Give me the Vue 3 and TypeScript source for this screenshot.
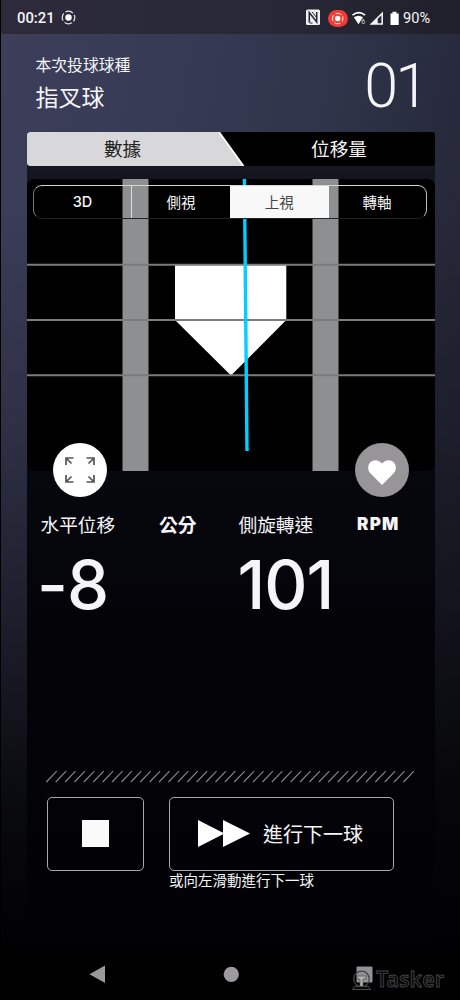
<script setup lang="ts">
import { ref } from 'vue'

const views = ['3D', '側視', '上視', '轉軸']
const activeView = ref(2)
const metrics = [
  { label: '水平位移', unit: '公分', value: '-8', latin: false },
  { label: '側旋轉速', unit: 'RPM', value: '101', latin: true },
]
const hatches = Array.from({ length: 39 }, (_, i) => i * 9.4)
</script>

<template>
  <div class="screen">
    <header class="status">
      <span class="clock">00:21</span>
      <svg class="rec" width="15" height="15" viewBox="0 0 15 15">
        <circle cx="7.5" cy="7.5" r="3.2" fill="#fff" />
        <circle cx="7.5" cy="7.5" r="6.3" fill="none" stroke="#e6e6ea" stroke-width="1.2" stroke-dasharray="7.9 2" stroke-dashoffset="3.9" />
      </svg>
      <svg class="icons" width="100" height="20" viewBox="306 7 100 20">
        <path d="M308.500 8.500h11q1.500 0 1.500 1.500v12.500q0 1.500-1.500 1.500h-11q-1.500 0-1.500-1.500v-12.500q0-1.500 1.500-1.500z" fill="#f1f1f3" />
        <path d="M310.300 21.500V11.500l7.400 9.500V11" fill="none" stroke="#292938" stroke-width="1.600" />
        <path d="M313 10.800l4.500 5.700M310.500 22h3" fill="none" stroke="#292938" stroke-width="1" />
        <rect x="329" y="9" width="20" height="17" rx="8.5" fill="#f13c35" />
        <circle cx="338.7" cy="17.5" r="5.2" fill="none" stroke="#ffd5cf" stroke-width="1.1" stroke-dasharray="6.2 2" stroke-dashoffset="3" />
        <circle cx="338.7" cy="17.5" r="2.7" fill="#fff" />
        <path d="M353.500 14.200q6.200-5.200 12.600 0" fill="none" stroke="#fff" stroke-width="1.600" />
        <path d="M354.800 16.300q4.500-3.300 9.200 0l-4.500 7z" fill="#fff" />
        <text x="362.300" y="22.500" class="tiny">6</text>
        <path d="M370.500 23.800L384 10.500v13.300z" fill="#f4f4f5" />
        <path d="M378.700 17.800l3.700-3.600v8h-3.700z" fill="#292938" />
        <path d="M391.500 12.400h2v-1.600h4v1.600h2.200V24h-8.200z" fill="#fff" />
      </svg>
      <span class="battery">90%</span>
    </header>

    <main>
      <section class="pitch">
        <div>
          <p class="caption">本次投球球種</p>
          <h1>指叉球</h1>
        </div>
        <span class="number">01</span>
      </section>

      <section class="panel">
        <nav class="tabs">
          <svg class="tab-shape" width="408" height="34" viewBox="0 0 408 34">
            <path d="M2 0H192L216.500 34H2Q0 34 0 32V2Q0 0 2 0z" fill="#d8d8da" />
            <path d="M192 0L216.500 34" stroke="#fff" stroke-width="1.800" />
          </svg>
          <span class="tab selected">數據</span>
          <span class="tab">位移量</span>
        </nav>

        <div class="viewer">
          <svg class="field" width="408" height="292" viewBox="27 179 408 292">
            <path d="M175 265h111.300v55L231 375.500L175 320z" fill="#fff" />
            <path d="M122.500 179h26v292h-26zM312.500 179h26v292h-26z" fill="#8e8f90" />
            <path d="M27 264.800h408M27 320h408M27 375.300h408" stroke="#7b7b7b" stroke-width="2" />
            <path d="M244.400 179L247 451" stroke="#00cfff" stroke-width="3.400" />
          </svg>
          <div class="segments">
            <button v-for="(view, i) in views" :key="view" :class="{ active: activeView === i }" @click="activeView = i">
              {{ view }}
            </button>
          </div>
          <div class="round-actions">
            <button class="round light">
              <svg width="32" height="28" viewBox="0 0 32 28" fill="none" stroke="#555" stroke-width="1.700">
                <path d="M9.500 2H2v7M2 2l5.500 5.500M22.500 2H30v7M30 2l-5.500 5.500M9.500 26H2v-7M2 26l5.500-5.500M22.500 26H30v-7M30 26l-5.500-5.500" />
              </svg>
            </button>
            <button class="round gray">
              <svg width="28" height="25" viewBox="0 0 28 25">
                <path d="M14 25L2.300 13.300C-.6 10.200-.5 5 2.300 2.200C5.500-.9 10.700-.5 14 3.600C17.300-.5 22.500-.9 25.700 2.200C28.500 5 28.600 10.200 25.700 13.300z" fill="#fff" />
              </svg>
            </button>
          </div>
        </div>

        <div class="metrics">
          <article v-for="m in metrics" :key="m.label">
            <div class="metric-head">
              <span>{{ m.label }}</span>
              <b :class="{ latin: m.latin }">{{ m.unit }}</b>
            </div>
            <strong :class="{ negative: m.value.startsWith('-') }">{{ m.value }}</strong>
          </article>
        </div>

        <svg class="hatch" width="372" height="12" viewBox="0 0 372 12">
          <path v-for="x in hatches" :key="x" :d="`M${x + 1.3} 11l10.400-10.800`" stroke="#8c8c8e" stroke-width="1.100" />
        </svg>

        <div class="controls">
          <button class="box stop"><i></i></button>
          <div class="next-wrap">
            <button class="box next">
              <svg width="53" height="27" viewBox="0 0 53 27" fill="#fff">
                <path d="M0 0l26.500 13.500L0 27zM25 0l27 13.500L25 27z" />
              </svg>
              <span>進行下一球</span>
            </button>
            <small>或向左滑動進行下一球</small>
          </div>
        </div>
      </section>
    </main>

    <footer class="navbar">
      <svg width="460" height="52" viewBox="0 948 460 52">
        <path d="M89.500 974.300L105 965.500v17.500z" fill="#9c9a9d" />
        <circle cx="231.300" cy="974.300" r="7.600" fill="#9c9a9d" />
        <rect x="356.500" y="966.500" width="16" height="16" rx="1" fill="#929294" />
        <circle cx="361.500" cy="979" r="7.800" fill="none" stroke="#454547" stroke-width="1.300" />
        <path d="M357 976h9v3h-3v8h-3v-8h-3z" fill="#b4b4b5" stroke="#555" stroke-width=".8" />
        <path d="M352.500 989.500l2-3h14l2 3z" fill="#080808" stroke="#4a4a4b" stroke-width="1" />
        <text x="376" y="987" textLength="68" lengthAdjust="spacingAndGlyphs" class="brand">Tasker</text>
      </svg>
    </footer>
  </div>
</template>

<style>
body {
  background: #000;
}
</style>

<style scoped>
* {
  box-sizing: border-box;
}

.screen {
  width: 460px;
  height: 1000px;
  display: flex;
  flex-direction: column;
  overflow: hidden;
  border-left: 1px solid #000;
  color: #f5f5f7;
  font-family: Inter, "Noto Sans CJK TC", sans-serif;
  background:
    linear-gradient(180deg, transparent 0, transparent 200px, rgba(0, 0, 0, 0.2) 420px, rgba(0, 0, 0, 0.5) 620px, rgba(0, 0, 0, 0.83) 800px, #010103 948px),
    linear-gradient(100deg, #3c3e5a 0, #383b56 25%, #2e3449 55%, #252738 80%, #20212f 100%);
}

button {
  padding: 0;
  color: inherit;
  font: inherit;
  background: none;
  border: 0;
}

.status {
  height: 34px;
  flex: none;
  display: flex;
  align-items: center;
  padding: 1px 0 0 16px;
  background: linear-gradient(90deg, #2d2b3b, #292837 55%, #20202c);
  font-family: Roboto, sans-serif;
  font-size: 14.800px;
  font-weight: 500;
}

.clock {
  width: 38px;
}

.rec {
  margin-left: 6px;
}

.icons {
  margin-left: 229px;
}

.battery {
  margin-left: -2px;
  font-size: 14.600px;
  font-weight: 400;
}

.tiny {
  font: 7px Roboto, sans-serif;
  fill: #ddd;
}

main {
  height: 914px;
  flex: none;
  padding: 0 25px 5px 26px;
}

.pitch {
  height: 97.500px;
  display: flex;
  justify-content: space-between;
  padding: 21px 9px 0 8.500px;
}

.caption {
  margin: 0;
  font-size: 15.800px;
  line-height: 22px;
}

h1 {
  margin: 4px 0 0;
  font-size: 23px;
  line-height: 34px;
  font-weight: 400;
}

.number {
  margin-top: 1px;
  font: 300 61px/60px Roboto, sans-serif;
  letter-spacing: -3px;
}

.panel {
  height: 811.500px;
  border-radius: 3px 3px 10px 10px;
  background: linear-gradient(180deg, #191a26 0, #15151f 47px, #07080e 340px, #030308 500px, #020206 100%);
}

.tabs {
  position: relative;
  height: 34px;
  display: grid;
  grid-template-columns: 191px 1fr;
  align-items: center;
  border-radius: 3px;
  overflow: hidden;
  background: #000;
}

.tab-shape {
  position: absolute;
  inset: 0;
}

.tab {
  position: relative;
  text-align: center;
  font-size: 18.600px;
  padding-left: 25px;
  line-height: 34px;
}

.tab.selected {
  color: #222;
  padding-left: 0;
}

.viewer {
  position: relative;
  height: 292px;
  margin-top: 13.500px;
  padding: 6px 8.500px 0 6px;
  border-radius: 8px;
  background: #000;
}

.field {
  position: absolute;
  inset: 0;
}

.segments {
  position: relative;
  height: 33.500px;
  display: grid;
  grid-template-columns: 98px 98px 98.500px 1fr;
  border: 1px solid;
  border-color: #d6d6d6 #bbb #222 #777;
  border-radius: 9px;
}

.segments button {
  font-size: 14.500px;
  font-weight: 500;
}

.segments button:not(:first-child) {
  font-weight: 400;
}

.segments button:first-child {
  border-right: 1px solid #ddd;
}

.segments button.active {
  color: #444;
  background: #f8f8f8;
}

.round-actions {
  position: absolute;
  left: 25.500px;
  right: 26.500px;
  bottom: -26px;
  display: flex;
  justify-content: space-between;
}

.round {
  width: 54px;
  height: 54px;
  display: grid;
  place-items: center;
  border-radius: 50%;
}

.round.light {
  background: #fff;
}

.round.gray {
  padding-top: 4px;
  background: #979598;
}

.metrics {
  height: 300px;
  display: grid;
  grid-template-columns: 198px 196px;
  padding: 37.500px 0 0 13.500px;
}

.metric-head {
  height: 30px;
  display: flex;
  align-items: center;
  font-size: 18.700px;
}

.metric-head span {
  width: 118.500px;
  flex: none;
  white-space: nowrap;
}

.metric-head b {
  font-weight: 700;
}

.metric-head .latin {
  font-size: 17px;
  font-weight: 900;
  letter-spacing: 1.300px;
}

.metrics strong {
  display: block;
  margin: 6.500px 0 0 -1px;
  font-size: 67px;
  line-height: 80px;
  font-weight: 500;
  letter-spacing: -1px;
}

.metrics strong.negative {
  margin-left: -3.500px;
}

.hatch {
  display: block;
  margin: 0 0 0 18px;
}

.controls {
  display: flex;
  gap: 25px;
  padding: 13.500px 0 0 20px;
}

.box {
  height: 74px;
  display: flex;
  align-items: center;
  border: 1.500px solid #aaa8ab;
  border-radius: 5px;
}

.stop {
  width: 97px;
  justify-content: center;
}

.stop i {
  width: 27px;
  height: 27px;
  background: #fafafa;
}

.next-wrap {
  width: 224.500px;
}

.next {
  width: 224.500px;
  gap: 12px;
  padding-left: 28px;
  font-size: 20px;
}

small {
  display: block;
  font-size: 14.500px;
  line-height: 20px;
}

.navbar {
  height: 52px;
  flex: none;
  margin-left: -1px;
  background: #000;
}

.navbar svg {
  display: block;
}

.brand {
  font: 600 22px "Noto Sans", sans-serif;
  fill: #080808;
  stroke: #444446;
  stroke-width: 0.900;
}
</style>
